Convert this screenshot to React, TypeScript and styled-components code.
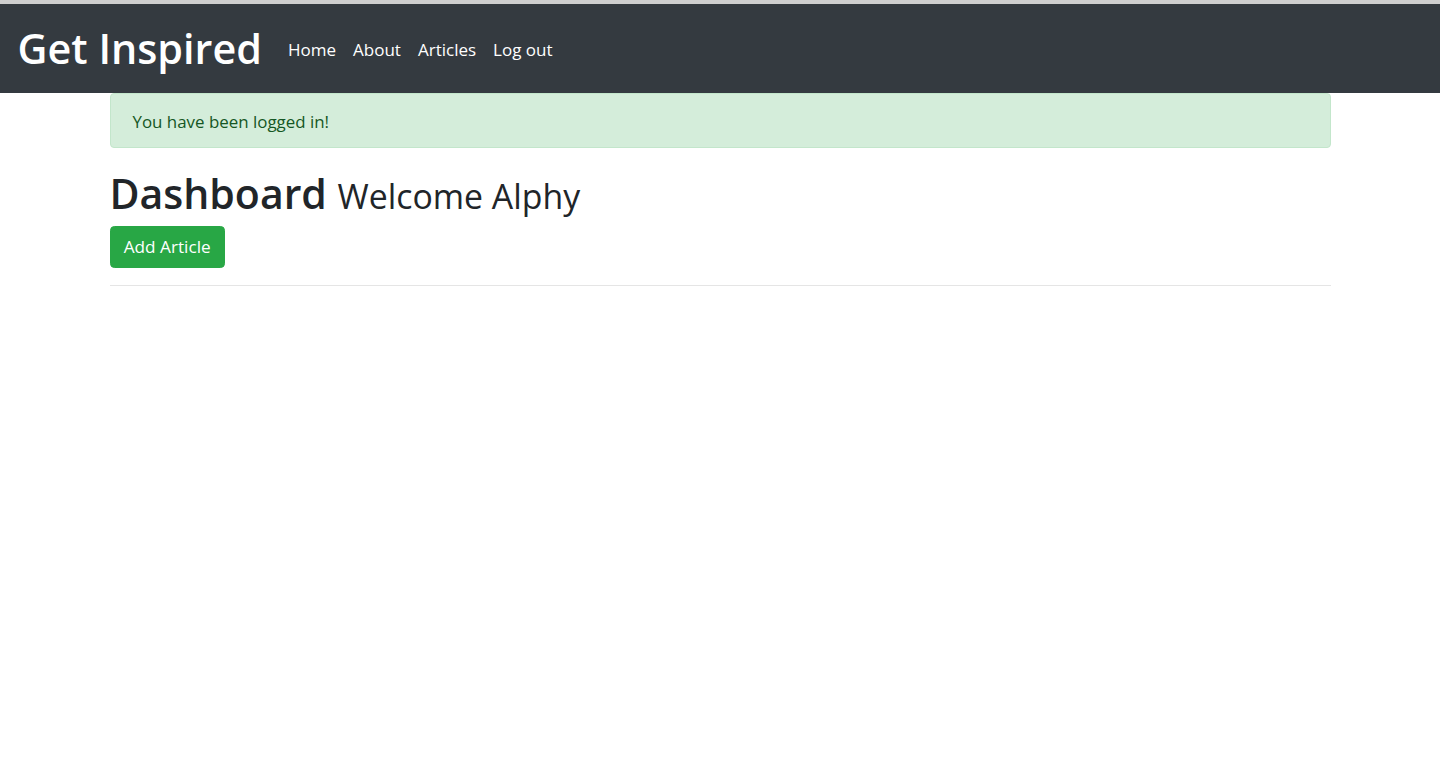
import React from 'react'
import styled, { createGlobalStyle } from 'styled-components'

const GlobalStyle = createGlobalStyle`
  html, body {
    margin: 0;
    padding: 0;
    background: #fff;
  }
  body {
    font-family: "Open Sans", "Noto Sans", sans-serif;
    font-size: 16.9px;
    line-height: 26.4px;
    color: #212529;
    border-top: 4px solid #cfcfcf;
  }
`

const Navbar = styled.nav`
  align-items: center;
  background: #343a40;
  display: flex;
  height: 89px;
  padding: 0 17.6px;
`

const Brand = styled.a`
  color: #fff;
  font-size: 41.3px;
  font-weight: 600;
  line-height: 1.2;
  margin-right: 17.6px;
  text-decoration: none;
`

const NavList = styled.ul`
  display: flex;
  list-style: none;
  margin: 0;
  padding: 3px 0 0;
`

const NavLink = styled.a`
  color: #fff;
  display: block;
  font-size: 17px;
  padding: 8.8px 8.5px;
  text-decoration: none;
`

const Container = styled.main`
  margin: 0 auto;
  max-width: 1221px;
`

const Alert = styled.div`
  background: #d4edda;
  border: 1px solid #c3e6cb;
  border-radius: 4px;
  color: #155724;
  margin-bottom: 17.6px;
  padding: 14.5px 22px 12px;
`

const Title = styled.h1`
  font-size: 41px;
  font-weight: 600;
  line-height: 52.8px;
  margin: 0 0 6.8px;
  padding-top: 1px;
`

const Subtitle = styled.small`
  font-size: 33.8px;
  font-weight: 400;
  line-height: 1;
`

const Button = styled.a`
  background: #28a745;
  border: 1px solid #28a745;
  border-radius: 4.4px;
  color: #fff;
  display: block;
  font-size: 17.2px;
  padding: 6.6px 13.2px;
  text-decoration: none;
  width: fit-content;
`

const Rule = styled.hr`
  border: 0;
  border-top: 1px solid rgba(0, 0, 0, 0.1);
  margin: 17.6px 0;
`

export default function App() {
  return (
    <>
      <GlobalStyle />
      <Navbar>
        <Brand href="#">Get Inspired</Brand>
        <NavList>
          <li><NavLink href="#">Home</NavLink></li>
          <li><NavLink href="#">About</NavLink></li>
          <li><NavLink href="#">Articles</NavLink></li>
          <li><NavLink href="#">Log out</NavLink></li>
        </NavList>
      </Navbar>
      <Container>
        <Alert>You have been logged in!</Alert>
        <Title>
          Dashboard <Subtitle>Welcome Alphy</Subtitle>
        </Title>
        <Button href="#">Add Article</Button>
        <Rule />
      </Container>
    </>
  )
}
